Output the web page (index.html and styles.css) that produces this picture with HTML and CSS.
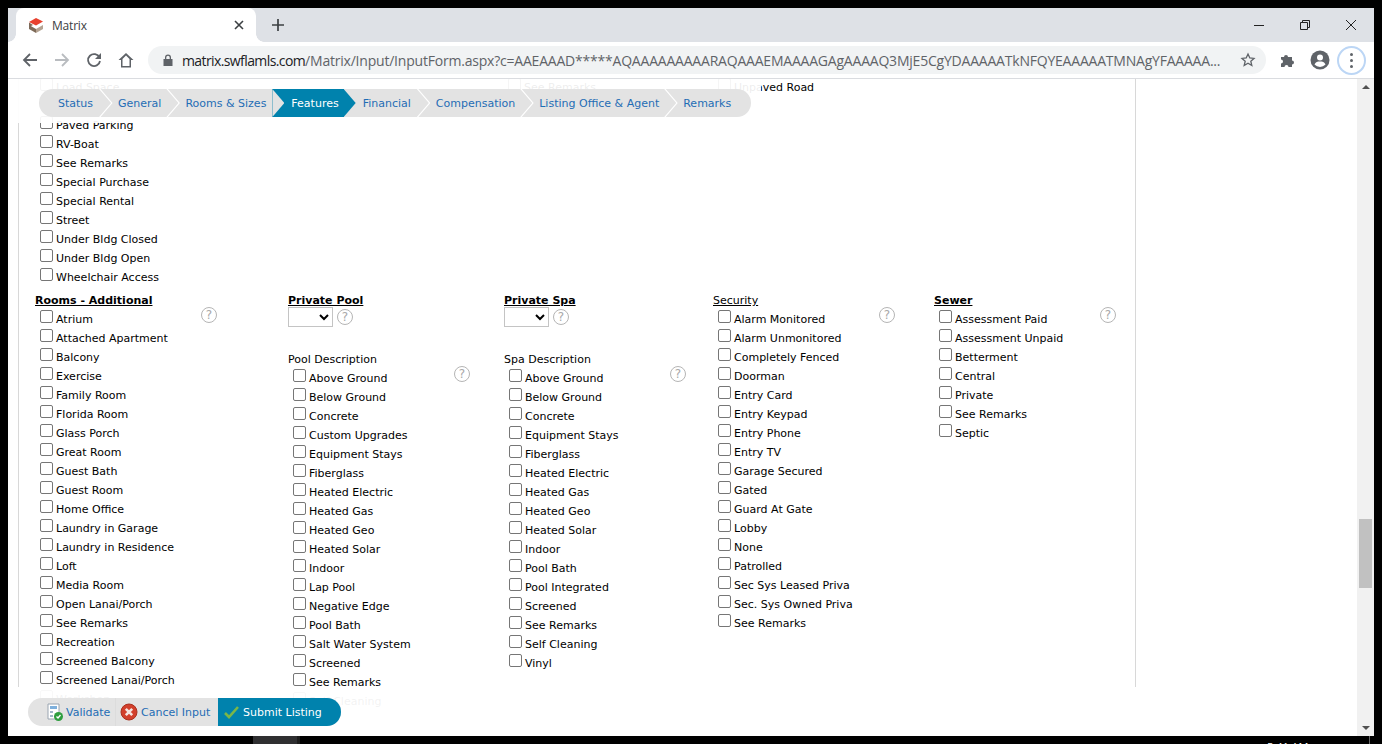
FILE: index.html
```html
<!DOCTYPE html>
<html lang="en">
<head>
<meta charset="utf-8">
<title>Matrix</title>
<link rel="stylesheet" href="styles.css">
</head>
<body>
<div class="window">
  <div class="tabstrip">
    <div class="tab">
      <svg class="favicon" width="16" height="16" viewBox="0 0 16 16"><path d="M1 8 8 12v4L1 12z" fill="#7d6a58"/><path d="M15 8 8 12v4l7-4z" fill="#b5a392"/><path d="M1 5.500 5 8 1 10z" fill="#7d6a58"/><path d="M1 5 8 1l7 3.500L8 8.500z" fill="#e8412e"/></svg>
      <span class="tab-title">Matrix</span>
      <svg class="tab-close" width="10" height="10" viewBox="0 0 10 10"><path d="M1 1l8 8M9 1l-8 8" stroke="#3c4043" stroke-width="1.6"/></svg>
    </div>
    <svg class="newtab" width="14" height="14" viewBox="0 0 14 14"><path d="M7 1v12M1 7h12" stroke="#3c4043" stroke-width="1.7"/></svg>
    <div class="winctl">
      <svg width="12" height="12" viewBox="0 0 12 12"><path d="M1 6.500h10" stroke="#222" stroke-width="1"/></svg>
      <svg width="12" height="12" viewBox="0 0 12 12"><path d="M1.500 3.500h7v7h-7zM3.500 3.500v-2h7v7h-2" fill="none" stroke="#222" stroke-width="1"/></svg>
      <svg width="12" height="12" viewBox="0 0 12 12"><path d="M1 1l10 10M11 1 1 11" stroke="#222" stroke-width="1"/></svg>
    </div>
  </div>
  <div class="toolbar">
    <svg class="tb" width="16" height="16" viewBox="0 0 16 16"><path d="M15 8H2M8 2 2 8l6 6" fill="none" stroke="#5f6368" stroke-width="1.8"/></svg>
    <svg class="tb" width="16" height="16" viewBox="0 0 16 16"><path d="M1 8h13M8 2l6 6-6 6" fill="none" stroke="#b9bcc0" stroke-width="1.8"/></svg>
    <svg class="tb" width="16" height="16" viewBox="0 0 16 16"><path d="M13.500 5.500A6 6 0 1 0 14 9" fill="none" stroke="#5f6368" stroke-width="1.8"/><path d="M15 1v6H9z" fill="#5f6368"/></svg>
    <svg class="tb tb-home" width="16" height="16" viewBox="0 0 16 16"><path d="M8 1 .5 8H3v7.500h10V8h2.500zM4.500 7 8 3.500 11.500 7v7h-7z" fill="#5f6368" fill-rule="evenodd"/></svg>
    <div class="omnibox">
      <svg class="lock" width="10" height="12" viewBox="0 0 10 12"><path d="M2 5V3.500a3 3 0 0 1 6 0V5h1.500v7H.5V5zm1.300 0h3.400V3.500a1.700 1.700 0 0 0-3.400 0z" fill="#5f6368"/></svg>
      <span class="url"><b>matrix.swflamls.com</b>/Matrix/Input/InputForm.aspx?c=AAEAAAD*****AQAAAAAAAAARAQAAAEMAAAAGAgAAAAQ3MjE5CgYDAAAAATkNFQYEAAAAATMNAgYFAAAAA...</span>
      <svg class="star" width="16" height="16" viewBox="0 0 16 16"><path d="m8 2 1.800 4 4.200.4-3.200 2.800 1 4.300L8 11.200 4.200 13.500l1-4.300L2 6.400 6.200 6z" fill="none" stroke="#5f6368" stroke-width="1.300"/></svg>
    </div>
    <svg class="ext" width="16" height="16" viewBox="0 0 16 16"><path d="M1 5h3a2 2 0 1 1 4 0h4v3.500a2 2 0 1 1 0 4V15H8.500a2 2 0 1 0-4 0H1v-3.500a2 2 0 1 0 0-4z" fill="#5f6368"/></svg>
    <svg class="profile" width="20" height="20" viewBox="0 0 20 20"><circle cx="10" cy="10" r="9.500" fill="#5f6368"/><circle cx="10" cy="7.500" r="3" fill="#fff"/><path d="M4.500 14.500c1-2.500 3-3 5.500-3s4.500.5 5.500 3a7.500 7.500 0 0 1-11 0z" fill="#fff"/></svg>
    <div class="menu"><i></i><i></i><i></i></div>
  </div>
  <div class="viewport">
    <div class="page">
      <div class="frame">
        <div class="top-row">
          <label class="opt ghost-a"><input type="checkbox">Load Space</label>
          <label class="opt ghost-b"><input type="checkbox">See Remarks</label>
          <label class="opt ghost-c"><input type="checkbox">Unpaved Road</label>
        </div>
        <div class="carry">
          <label class="opt"><input type="checkbox">Off Street</label>
          <label class="opt"><input type="checkbox">Paved Parking</label>
          <label class="opt"><input type="checkbox">RV-Boat</label>
          <label class="opt"><input type="checkbox">See Remarks</label>
          <label class="opt"><input type="checkbox">Special Purchase</label>
          <label class="opt"><input type="checkbox">Special Rental</label>
          <label class="opt"><input type="checkbox">Street</label>
          <label class="opt"><input type="checkbox">Under Bldg Closed</label>
          <label class="opt"><input type="checkbox">Under Bldg Open</label>
          <label class="opt"><input type="checkbox">Wheelchair Access</label>
        </div>
        <div class="columns">
          <section class="col col-rooms">
            <h4 class="head">Rooms - Additional</h4>
            <span class="help help-a">?</span>
            <div class="opts">
              <label class="opt"><input type="checkbox">Atrium</label>
              <label class="opt"><input type="checkbox">Attached Apartment</label>
              <label class="opt"><input type="checkbox">Balcony</label>
              <label class="opt"><input type="checkbox">Exercise</label>
              <label class="opt"><input type="checkbox">Family Room</label>
              <label class="opt"><input type="checkbox">Florida Room</label>
              <label class="opt"><input type="checkbox">Glass Porch</label>
              <label class="opt"><input type="checkbox">Great Room</label>
              <label class="opt"><input type="checkbox">Guest Bath</label>
              <label class="opt"><input type="checkbox">Guest Room</label>
              <label class="opt"><input type="checkbox">Home Office</label>
              <label class="opt"><input type="checkbox">Laundry in Garage</label>
              <label class="opt"><input type="checkbox">Laundry in Residence</label>
              <label class="opt"><input type="checkbox">Loft</label>
              <label class="opt"><input type="checkbox">Media Room</label>
              <label class="opt"><input type="checkbox">Open Lanai/Porch</label>
              <label class="opt"><input type="checkbox">See Remarks</label>
              <label class="opt"><input type="checkbox">Recreation</label>
              <label class="opt"><input type="checkbox">Screened Balcony</label>
              <label class="opt"><input type="checkbox">Screened Lanai/Porch</label>
              <label class="opt"><input type="checkbox">Workshop</label>
            </div>
          </section>
          <section class="col col-pool">
            <h4 class="head">Private Pool</h4>
            <div class="pick"><select class="sel"><option></option></select><span class="help">?</span></div>
            <div class="sub">Pool Description</div>
            <span class="help help-b">?</span>
            <div class="opts">
              <label class="opt"><input type="checkbox">Above Ground</label>
              <label class="opt"><input type="checkbox">Below Ground</label>
              <label class="opt"><input type="checkbox">Concrete</label>
              <label class="opt"><input type="checkbox">Custom Upgrades</label>
              <label class="opt"><input type="checkbox">Equipment Stays</label>
              <label class="opt"><input type="checkbox">Fiberglass</label>
              <label class="opt"><input type="checkbox">Heated Electric</label>
              <label class="opt"><input type="checkbox">Heated Gas</label>
              <label class="opt"><input type="checkbox">Heated Geo</label>
              <label class="opt"><input type="checkbox">Heated Solar</label>
              <label class="opt"><input type="checkbox">Indoor</label>
              <label class="opt"><input type="checkbox">Lap Pool</label>
              <label class="opt"><input type="checkbox">Negative Edge</label>
              <label class="opt"><input type="checkbox">Pool Bath</label>
              <label class="opt"><input type="checkbox">Salt Water System</label>
              <label class="opt"><input type="checkbox">Screened</label>
              <label class="opt"><input type="checkbox">See Remarks</label>
              <label class="opt"><input type="checkbox">Self Cleaning</label>
            </div>
          </section>
          <section class="col col-spa">
            <h4 class="head">Private Spa</h4>
            <div class="pick"><select class="sel"><option></option></select><span class="help">?</span></div>
            <div class="sub">Spa Description</div>
            <span class="help help-b">?</span>
            <div class="opts">
              <label class="opt"><input type="checkbox">Above Ground</label>
              <label class="opt"><input type="checkbox">Below Ground</label>
              <label class="opt"><input type="checkbox">Concrete</label>
              <label class="opt"><input type="checkbox">Equipment Stays</label>
              <label class="opt"><input type="checkbox">Fiberglass</label>
              <label class="opt"><input type="checkbox">Heated Electric</label>
              <label class="opt"><input type="checkbox">Heated Gas</label>
              <label class="opt"><input type="checkbox">Heated Geo</label>
              <label class="opt"><input type="checkbox">Heated Solar</label>
              <label class="opt"><input type="checkbox">Indoor</label>
              <label class="opt"><input type="checkbox">Pool Bath</label>
              <label class="opt"><input type="checkbox">Pool Integrated</label>
              <label class="opt"><input type="checkbox">Screened</label>
              <label class="opt"><input type="checkbox">See Remarks</label>
              <label class="opt"><input type="checkbox">Self Cleaning</label>
              <label class="opt"><input type="checkbox">Vinyl</label>
            </div>
          </section>
          <section class="col col-sec">
            <h4 class="head plain">Security</h4>
            <span class="help help-a">?</span>
            <div class="opts">
              <label class="opt"><input type="checkbox">Alarm Monitored</label>
              <label class="opt"><input type="checkbox">Alarm Unmonitored</label>
              <label class="opt"><input type="checkbox">Completely Fenced</label>
              <label class="opt"><input type="checkbox">Doorman</label>
              <label class="opt"><input type="checkbox">Entry Card</label>
              <label class="opt"><input type="checkbox">Entry Keypad</label>
              <label class="opt"><input type="checkbox">Entry Phone</label>
              <label class="opt"><input type="checkbox">Entry TV</label>
              <label class="opt"><input type="checkbox">Garage Secured</label>
              <label class="opt"><input type="checkbox">Gated</label>
              <label class="opt"><input type="checkbox">Guard At Gate</label>
              <label class="opt"><input type="checkbox">Lobby</label>
              <label class="opt"><input type="checkbox">None</label>
              <label class="opt"><input type="checkbox">Patrolled</label>
              <label class="opt"><input type="checkbox">Sec Sys Leased Priva</label>
              <label class="opt"><input type="checkbox">Sec. Sys Owned Priva</label>
              <label class="opt"><input type="checkbox">See Remarks</label>
            </div>
          </section>
          <section class="col col-sewer">
            <h4 class="head">Sewer</h4>
            <span class="help help-a">?</span>
            <div class="opts">
              <label class="opt"><input type="checkbox">Assessment Paid</label>
              <label class="opt"><input type="checkbox">Assessment Unpaid</label>
              <label class="opt"><input type="checkbox">Betterment</label>
              <label class="opt"><input type="checkbox">Central</label>
              <label class="opt"><input type="checkbox">Private</label>
              <label class="opt"><input type="checkbox">See Remarks</label>
              <label class="opt"><input type="checkbox">Septic</label>
            </div>
          </section>
        </div>
      </div>
      <div class="veil-top"></div>
      <div class="veil-bottom"></div>
      <nav class="steps">
        <a class="step wide">Status</a>
        <a class="step">General</a>
        <a class="step before-on">Rooms &amp; Sizes</a>
        <a class="step on">Features</a>
        <a class="step wide">Financial</a>
        <a class="step">Compensation</a>
        <a class="step">Listing Office &amp; Agent</a>
        <a class="step last">Remarks</a>
      </nav>
      <div class="actions">
        <a class="act act-validate">
          <svg width="18" height="20" viewBox="0 0 18 20"><path d="M2 2h11v15H2z" fill="#fff" stroke="#9aa5b1"/><path d="M4 4h7v3H4z" fill="#7fb0dc"/><path d="M4 9h3v2H4zM4 13h3v2H4z" fill="#9fb5c9"/><circle cx="12.500" cy="14.500" r="4.500" fill="#2e9e3f"/><path d="m10.500 14.500 1.500 1.500 2.500-3" fill="none" stroke="#fff" stroke-width="1.300"/></svg>
          Validate
        </a>
        <a class="act act-cancel">
          <svg width="18" height="18" viewBox="0 0 18 18"><circle cx="9" cy="9" r="8" fill="#d2402c"/><circle cx="9" cy="9" r="8" fill="none" stroke="#a8301f"/><path d="m5.800 5.800 6.400 6.400m0-6.400-6.400 6.400" stroke="#f4e4e0" stroke-width="2.600"/></svg>
          Cancel Input
        </a>
        <a class="act act-submit">
          <svg width="16" height="14" viewBox="0 0 16 14"><path d="m1 8 4 4 9-10" fill="none" stroke="#7ab648" stroke-width="2.600"/></svg>
          Submit Listing
        </a>
      </div>
    </div>
    <div class="scrollbar">
      <span class="arrow up"></span>
      <div class="track"><div class="thumb"></div></div>
      <span class="arrow down"></span>
    </div>
  </div>
</div>
<div class="taskbar"><span class="task"></span><span class="clock">5:41 AM</span><span class="tick"></span></div>
</body>
</html>
```
FILE: styles.css
```css
* { box-sizing: border-box; }
html, body { margin: 0; height: 100%; overflow: hidden; }
body { background: #000; padding: 8px 8px 0; font-family: "DejaVu Sans", Verdana, sans-serif; position: relative; }
.window { height: 728px; display: flex; flex-direction: column; background: #fff; }

.tabstrip { height: 34px; background: #dee1e6; display: flex; align-items: center; flex: none; }
.tab { position: relative; width: 240px; height: 34px; margin-left: 8px; background: #fff; border-radius: 8px 8px 0 0; display: flex; align-items: center; padding: 0 12px 0 12px; font: 12px "Open Sans", "Liberation Sans", sans-serif; letter-spacing: -.2px; color: #3c4043; }
.tab::before, .tab::after { content: ""; position: absolute; bottom: 0; width: 8px; height: 8px; }
.tab::before { left: -8px; background: radial-gradient(circle at 0 0, transparent 7.5px, #fff 8px); }
.tab::after { right: -8px; background: radial-gradient(circle at 100% 0, transparent 7.5px, #fff 8px); }
.favicon { flex: none; }
.tab-title { margin-left: 8px; flex: 1; }
.newtab { margin-left: 15px; }
.winctl { margin-left: auto; display: flex; gap: 34px; padding-right: 17px; align-items: center; }

.toolbar { height: 37px; flex: none; display: flex; align-items: center; background: #fff; border-bottom: 1px solid #dadce0; padding-left: 14px; }
.tb { margin-right: 16px; flex: none; }
.tb-home { margin-right: 14px; }
.omnibox { width: 1118px; height: 28px; border-radius: 14px; background: #f1f3f4; display: flex; align-items: center; padding-left: 15px; flex: none; }
.lock { flex: none; }
.url { margin-left: 9px; width: 1050px; flex: none; font: 14px "Open Sans", "Liberation Sans", sans-serif; color: #5f6368; white-space: nowrap; overflow: hidden; letter-spacing: -.21px; }
.url b { font-weight: 400; color: #202124; letter-spacing: -.6px; }
.star { margin-left: 8px; flex: none; }
.ext { margin-left: 14px; flex: none; }
.profile { margin-left: 14px; flex: none; }
.menu { width: 29px; height: 29px; margin-left: 7px; border: 2px solid #bcd6f5; border-radius: 50%; display: flex; flex-direction: column; align-items: center; justify-content: center; gap: 3px; flex: none; }
.menu i { width: 3px; height: 3px; border-radius: 50%; background: #5f6368; }

.viewport { flex: 1; min-height: 0; display: flex; position: relative; }
.page { flex: 1; min-width: 0; position: relative; overflow: hidden; }
.frame { margin-left: 10px; width: 1118px; height: 608px; border-left: 1px solid #d8d8d8; border-right: 1px solid #d8d8d8; }

.scrollbar { width: 17px; background: #f1f1f1; display: flex; flex-direction: column; align-items: center; flex: none; }
.track { flex: 1; width: 100%; padding: 424px 2px 0; }
.thumb { height: 69px; background: #c1c1c1; }
.arrow { width: 0; height: 0; border-left: 4px solid transparent; border-right: 4px solid transparent; margin: 6px 0; }
.arrow.up { border-bottom: 4px solid #505050; }
.arrow.down { border-top: 4px solid #505050; }

.opt { display: flex; align-items: flex-start; height: 19px; font-size: 11px; line-height: 13px; color: #000; white-space: nowrap; padding-top: 5px; }
.opt input { appearance: none; width: 13px; height: 13px; margin: -3px 3px 0 0; border: 1px solid #767676; border-radius: 2px; background: #fff; flex: none; }

.top-row { height: 0; position: relative; }
.ghost-a, .ghost-b, .ghost-c { position: absolute; top: -3px; }
.ghost-a { left: 21px; }
.ghost-b { left: 489px; }
.ghost-c { left: 699px; }
.carry { padding: 16px 0 0 21px; height: 215px; }
.columns { display: grid; grid-template-columns: 253px 216px 209px 221px 1fr; padding-left: 16px; }
.col { position: relative; }
.head { margin: 0; font-size: 11px; line-height: 13px; font-weight: 700; text-decoration: underline; height: 14px; color: #000; }
.head.plain { font-weight: 400; }
.opts { padding-left: 5px; }
.help { display: inline-flex; width: 16px; height: 16px; border: 1.500px solid #b5b5b5; border-radius: 50%; align-items: center; justify-content: center; font-size: 12px; line-height: 1; color: #a9a9a9; background: #fff; flex: none; }
.help-a { position: absolute; top: 13px; left: 166px; }
.help-b { position: absolute; top: 72px; left: 166px; }
.pick { display: flex; align-items: center; gap: 4px; height: 20px; margin-top: -1px; }
.sel { width: 45px; height: 20px; background: #fff; border: 1px solid #c4c4c4; font-size: 11px; font-family: inherit; }
.sub { margin-top: 26px; height: 14px; font-size: 11px; line-height: 13px; color: #000; }

.veil-top { position: absolute; left: 0; top: 0; width: 753px; height: 44px; background: rgba(255,255,255,.93); }
.veil-bottom { position: absolute; left: 0; top: 608px; width: 100%; height: 41px; background: rgba(255,255,255,.95); }

.steps { position: absolute; left: 31px; top: 10px; height: 28px; display: flex; background: #e3e3e3; border-radius: 14px; font-size: 11px; line-height: 29px; color: #1f6db5; overflow: hidden; }
.step { position: relative; padding: 0 5px 0 19px; white-space: nowrap; }
.step.wide { padding-right: 6px; }
.step::after { content: ""; position: absolute; left: 100%; top: 0; width: 14px; height: 28px; z-index: 1; background: #fff; clip-path: polygon(0 0, 1.500px 0, 13.500px 50%, 1.500px 100%, 0 100%, 12px 50%); }
.step.before-on { padding-right: 6px; }
.step.before-on::after { width: 12px; background: #e3e3e3; clip-path: polygon(0 0, 100% 50%, 0 100%); }
.step.on { background: #0082ad; color: #fff; padding-right: 5px; }
.step.on::after { width: 12px; background: #0082ad; clip-path: polygon(0 0, 100% 50%, 0 100%); }
.step.last { padding-right: 20px; }
.step.last::after { display: none; }

.actions { position: absolute; left: 20px; top: 619px; height: 28px; display: flex; border-radius: 14px; overflow: hidden; background: #e3e3e3; font-size: 11px; color: #1f6db5; }
.act { display: flex; align-items: center; gap: 2px; white-space: nowrap; }
.act-validate { padding-left: 18px; width: 88px; border-right: 1px solid #dcdcdc; }
.act-cancel { padding-left: 4px; width: 101px; gap: 3px; }
.act-submit { margin-left: 1px; width: 123px; padding-left: 6px; gap: 3px; background: #0082ad; color: #fff; }

.taskbar { position: absolute; left: 0; right: 0; bottom: 0; height: 8px; overflow: hidden; }
.task { position: absolute; left: 253px; top: 0; width: 47px; height: 8px; background: #2f2f31; border-right: 3px solid #1c1c1c; }
.clock { position: absolute; left: 1267px; top: 3px; color: #fff; font: 11px "Open Sans", sans-serif; }
.tick { position: absolute; left: 1369px; top: 0; width: 1px; height: 8px; background: #666; }
```
